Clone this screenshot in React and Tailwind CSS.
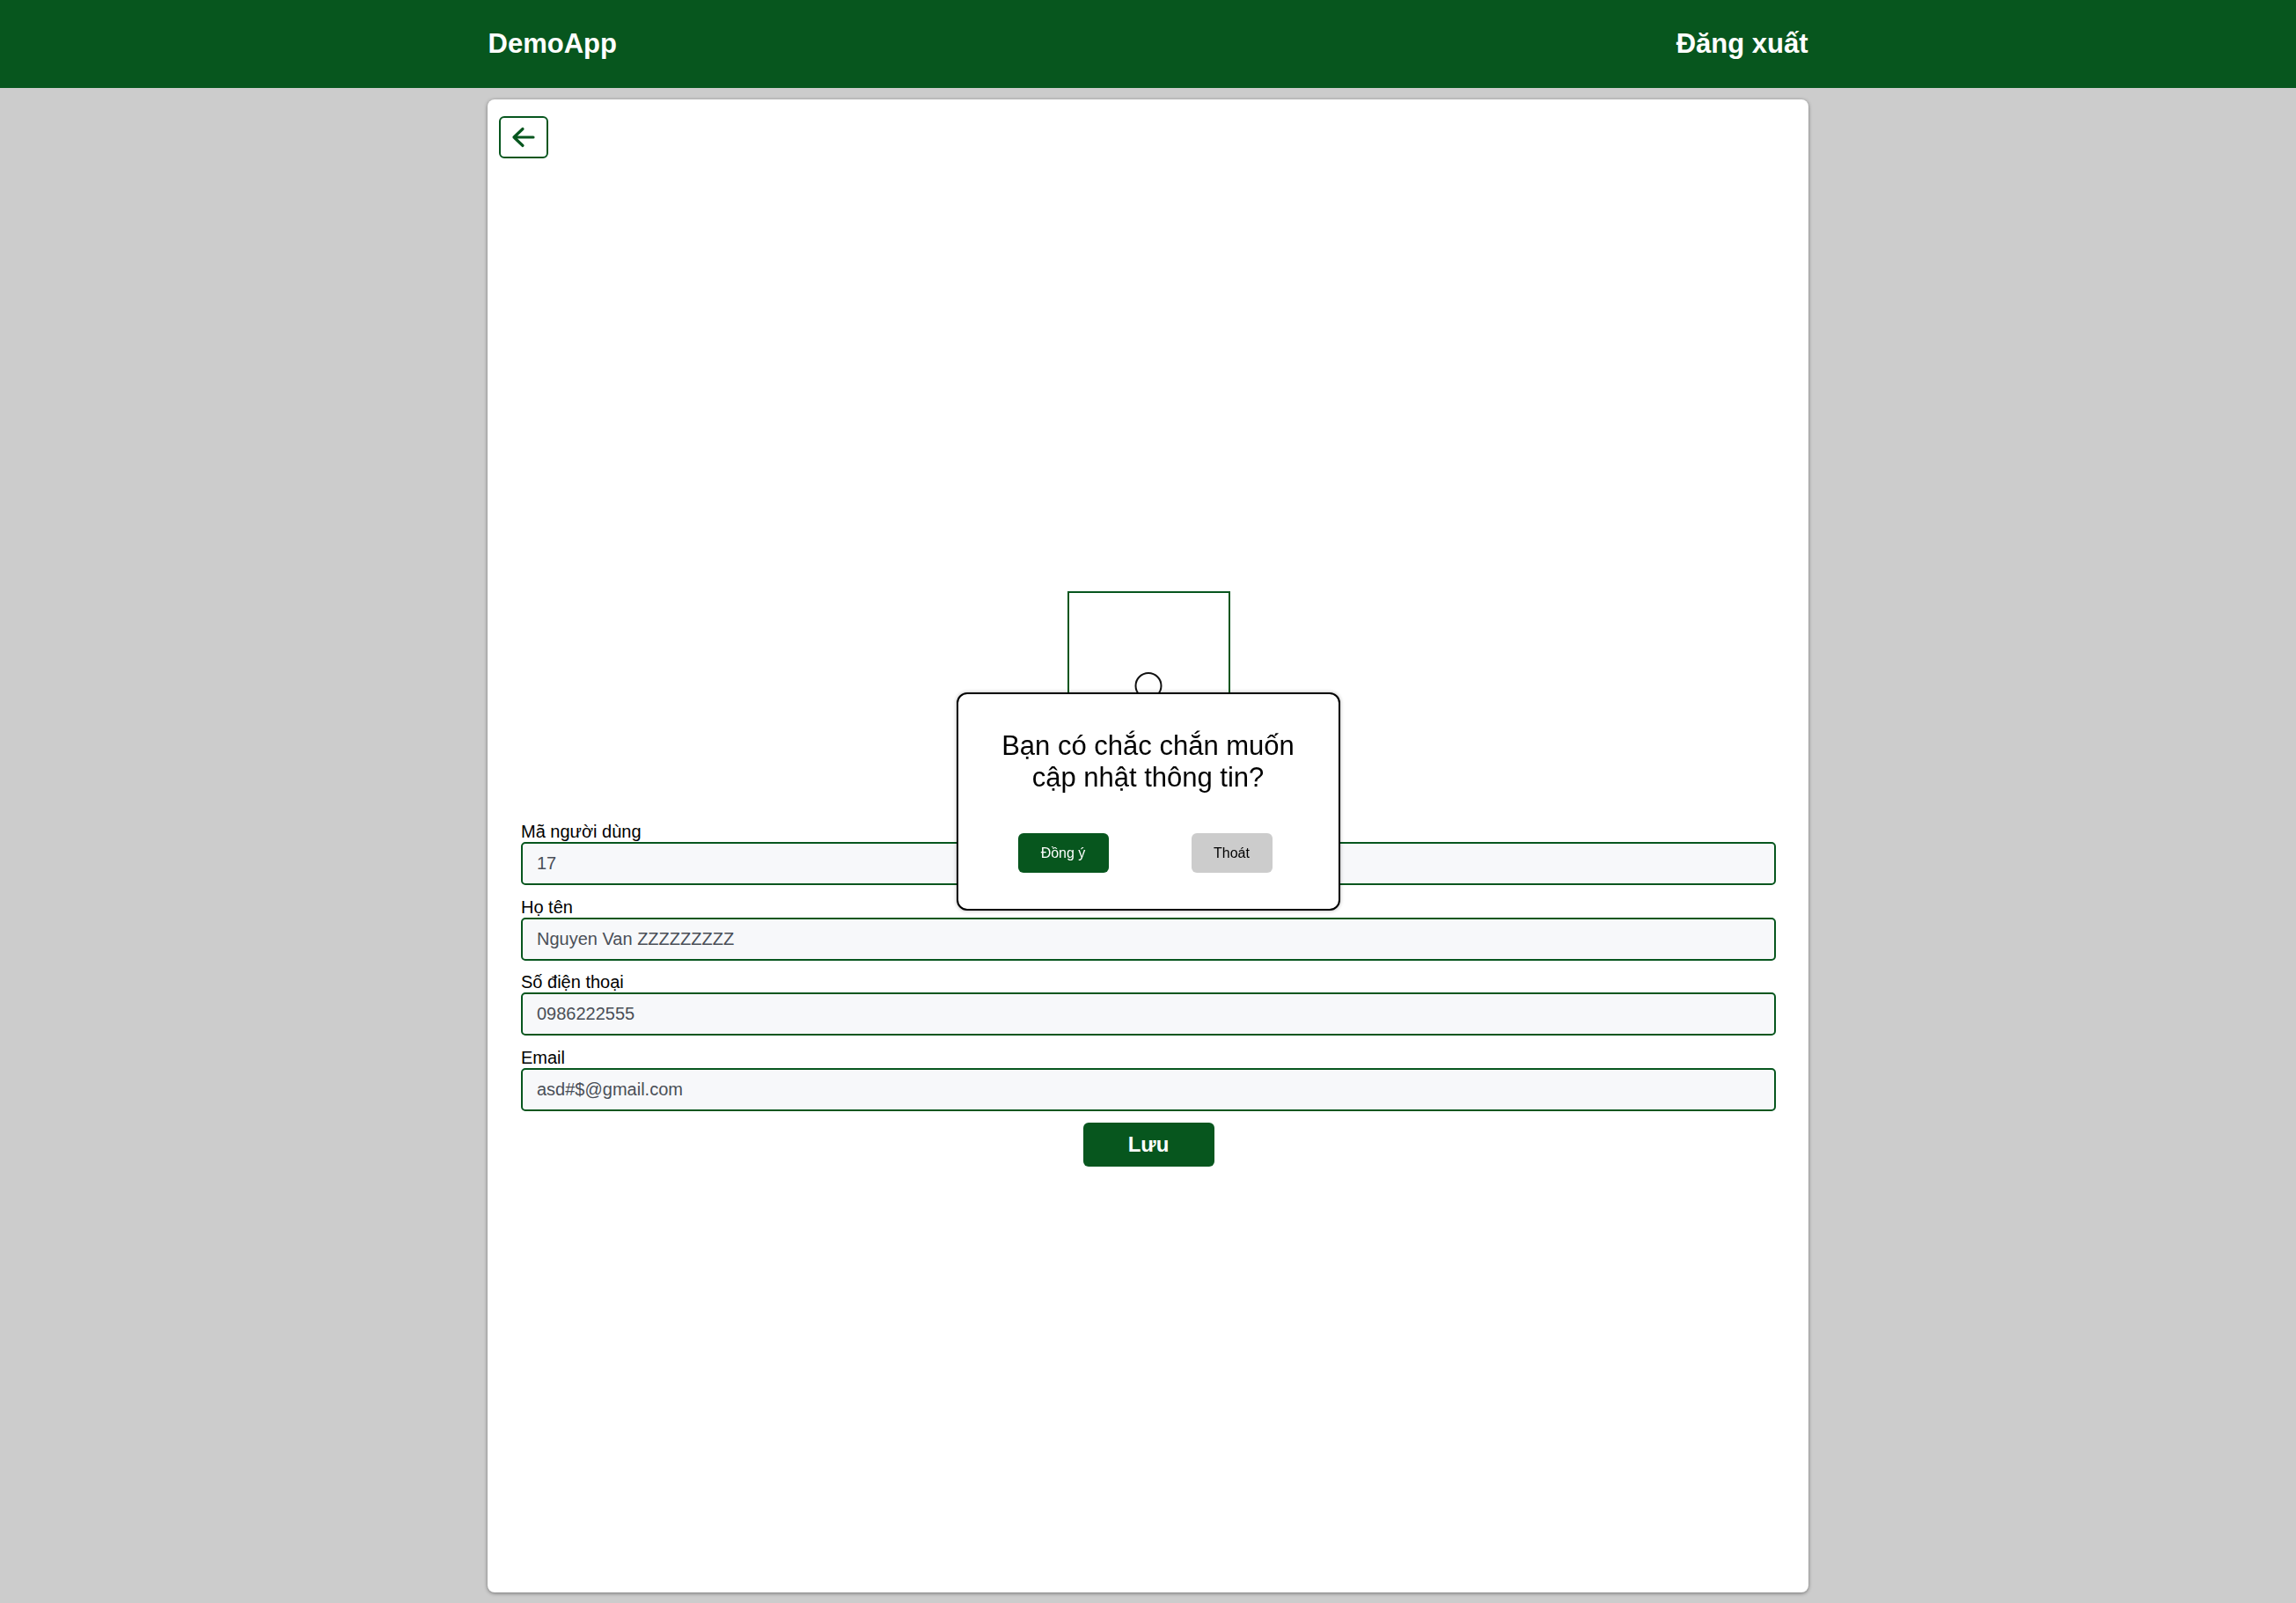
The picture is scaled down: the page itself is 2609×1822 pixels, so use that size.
import React from "react";

const font = { fontFamily: '"Liberation Sans", Arial, sans-serif' };

function Field({ label, value }) {
  return (
    <div className="mb-[13.5px] flex flex-col">
      <label className="text-[20px] leading-[23px] text-black">{label}</label>
      <input
        readOnly
        value={value}
        className="h-[49px] w-full rounded-[5px] border-2 border-[#07561e] bg-[#f7f8fa] px-[16px] text-[20px] text-[#4a4f57] outline-none"
      />
    </div>
  );
}

export default function App() {
  return (
    <div className="min-h-screen bg-[#cccccc]" style={font}>
      <header className="h-[100px] bg-[#07561e]">
        <div className="mx-auto flex h-full w-[1500px] items-center justify-between">
          <span className="text-[31px] font-bold text-white">DemoApp</span>
          <span className="text-[31px] font-bold text-white">Đăng xuất</span>
        </div>
      </header>

      <main className="mx-auto mt-[13px] flex h-[1697px] w-[1501px] flex-col rounded-[8px] bg-white pl-[13px] pr-[12px] pt-[19px] shadow-[0_1px_4px_rgba(0,0,0,0.45)]">
        <div>
          <button className="flex h-[48px] w-[56px] items-center justify-center rounded-[6px] border-2 border-[#07561e] bg-white">
            <svg width="28" height="24" viewBox="0 0 28 24" fill="none">
              <path
                d="M13 2.5 L3 12 L13 21.5 M3 12 H25"
                stroke="#07561e"
                strokeWidth="3.2"
                strokeLinecap="round"
                strokeLinejoin="round"
              />
            </svg>
          </button>
        </div>

        <div className="mt-[492px] flex flex-col px-[25px]">
          <div className="flex justify-center">
            <div className="relative h-[185px] w-[185px] border-2 border-[#07561e]">
              <div className="absolute left-1/2 top-[90px] h-[31px] w-[31px] -translate-x-1/2 rounded-full border-2 border-[#111] bg-white" />
            </div>
          </div>
          <div className="mt-[77px]">
            <Field label="Mã người dùng" value="17" />
            <Field label="Họ tên" value="Nguyen Van ZZZZZZZZZ" />
            <Field label="Số điện thoại" value="0986222555" />
            <Field label="Email" value="asd#$@gmail.com" />
          </div>
          <div className="flex justify-center">
            <button className="h-[50px] w-[149px] rounded-[6px] bg-[#07561e] text-[24px] font-bold text-white">
              Lưu
            </button>
          </div>
        </div>
      </main>

      <div className="fixed inset-0 flex items-center justify-center">
        <div className="h-[248px] w-[436px] rounded-[12px] border-2 border-black bg-white pt-[41px] shadow-[0_0_4px_rgba(0,0,0,0.3)]">
          <p className="text-center text-[31px] leading-[35.5px] text-black">
            Bạn có chắc chắn muốn
            <br />
            cập nhật thông tin?
          </p>
          <div className="mt-[46px] flex gap-[94px] pl-[68px]">
            <button className="h-[45px] w-[103px] rounded-[6px] bg-[#07561e] text-[16px] text-white">
              Đồng ý
            </button>
            <button className="h-[45px] w-[92px] rounded-[6px] bg-[#cccccc] text-[16px] text-black">
              Thoát
            </button>
          </div>
        </div>
      </div>
    </div>
  );
}
